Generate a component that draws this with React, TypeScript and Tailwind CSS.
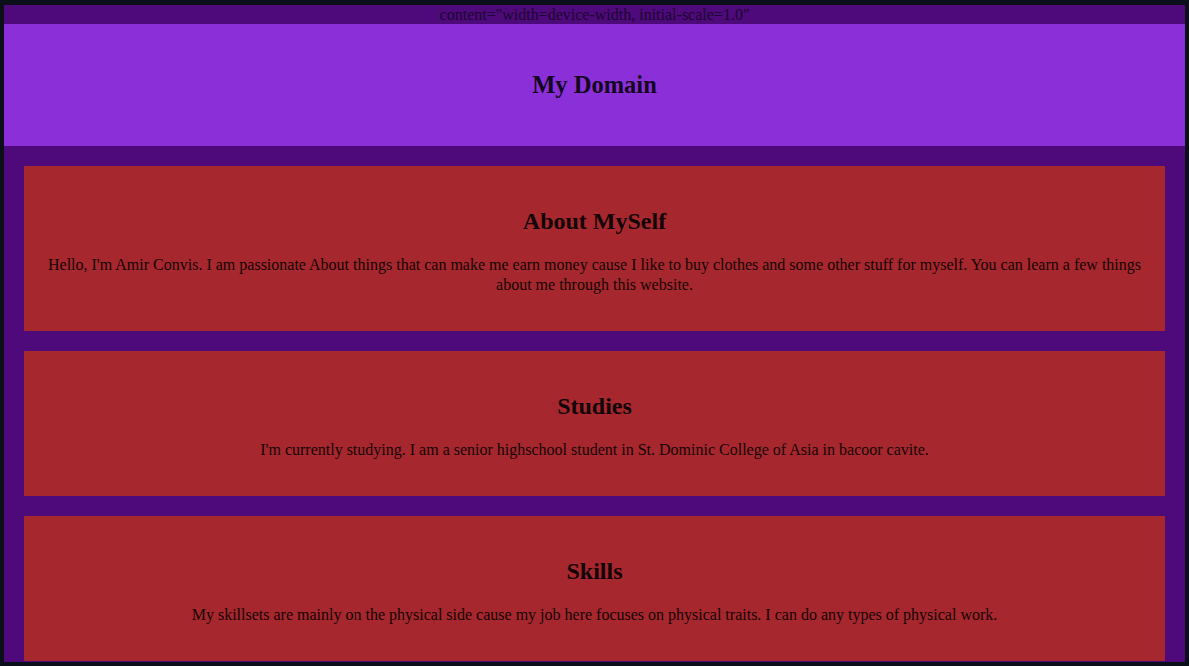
export default function App() {
  const cards = [
    {
      title: "About MySelf",
      body: "Hello, I'm Amir Convis. I am passionate About things that can make me earn money cause I like to buy clothes and some other stuff for myself. You can learn a few things about me through this website.",
    },
    {
      title: "Studies",
      body: "I'm currently studying. I am a senior highschool student in St. Dominic College of Asia in bacoor cavite.",
    },
    {
      title: "Skills",
      body: "My skillsets are mainly on the physical side cause my job here focuses on physical traits. I can do any types of physical work.",
    },
  ];
  return (
    <div className="h-[666px] w-[1189px] overflow-hidden bg-[#0b0f1a] pt-[5px] pl-[4px] pr-[4px] pb-[4px] font-['Liberation_Serif',serif] text-black">
      <div className="flex h-full flex-col overflow-hidden bg-[#4e0a7a]">
        <div className="h-[19px] shrink-0 text-center text-[16px] leading-[19px] text-[#1a0630]">
          content="width=device-width, initial-scale=1.0"
        </div>
        <div className="flex h-[122px] shrink-0 items-center justify-center bg-[#8b30d8]">
          <h1 className="text-[24.5px] font-bold leading-[28px] text-[#14061f]">My Domain</h1>
        </div>
        <div className="flex flex-col gap-[20px] px-[20px] pt-[20px]">
          {cards.map((c) => (
            <div key={c.title} className="shrink-0 bg-[#a6272d] px-[20px] pt-[41px] pb-[36px] text-center">
              <h2 className="text-[24px] font-bold leading-[28px] text-[#120306]">{c.title}</h2>
              <p className="mt-[20px] text-[16px] leading-[20px] text-[#140406]">{c.body}</p>
            </div>
          ))}
        </div>
      </div>
    </div>
  );
}
